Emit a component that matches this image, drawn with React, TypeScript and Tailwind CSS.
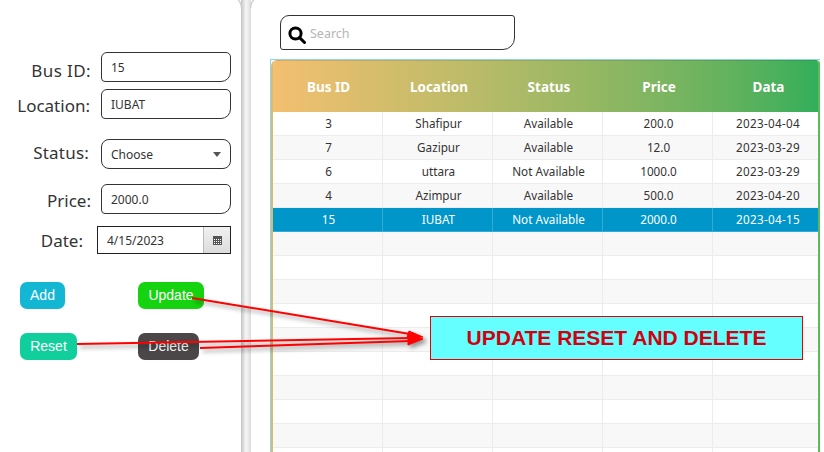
const rows = [
  ['3', 'Shafipur', 'Available', '200.0', '2023-04-04'],
  ['7', 'Gazipur', 'Available', '12.0', '2023-03-29'],
  ['6', 'uttara', 'Not Available', '1000.0', '2023-03-29'],
  ['4', 'Azimpur', 'Available', '500.0', '2023-04-20'],
  ['15', 'IUBAT', 'Not Available', '2000.0', '2023-04-15'],
];

const columns = ['Bus ID', 'Location', 'Status', 'Price', 'Data'];
const emptyRows = [0, 1, 2, 3, 4, 5, 6, 7, 8, 9];

function Field({ label, value, labelClass, className }: { label: string; value: string; labelClass: string; className: string }) {
  return (
    <div className={`flex items-center ${className}`}>
      <label className={`w-[91px] text-right text-[17px] leading-none text-[#333] ${labelClass}`}>{label}</label>
      <div className="ml-[10px] flex h-[30px] w-[130px] items-center rounded-tl-[6px] rounded-tr-[5px] rounded-br-[10px] rounded-bl-[4px] border border-[#333] bg-white pl-[9px] pt-[1px] text-[12px] text-[#333]">
        {value}
      </div>
    </div>
  );
}

function Table() {
  return (
    <div className="ml-[19px] mt-[9px] w-[550px] grow border-l border-t border-[#8fd3ee]">
      <div className="h-full w-[549px] overflow-hidden rounded-tl-[6px] rounded-tr-[4px] border-x-2 border-l-[#d8bd6c] border-r-[#5cb85c]">
        <div className="grid h-[52px] w-[550px] grid-cols-[111px_110px_110px_110px_109px] items-center bg-gradient-to-r from-[#f3bf70] to-[#2dae5a] pt-[2px] text-[13.5px] font-bold text-white shadow-[inset_0_1px_0_rgba(0,0,0,0.1)]">
          {columns.map((c) => (
            <div key={c} className="text-center">{c}</div>
          ))}
        </div>
        {rows.map((row, i) => (
          <div
            key={row[0]}
            className={`grid h-[24px] w-[550px] grid-cols-[110px_110px_110px_110px_110px] border-b text-[11.7px] ${
              i === 4
                ? 'border-[#33abd4] bg-[#0096c9] text-white'
                : i % 2 === 0
                  ? 'border-[#ececec] bg-white text-[#333]'
                  : 'border-[#ececec] bg-[#f8f8f8] text-[#333]'
            }`}
          >
            {row.map((cell, j) => (
              <div key={j} className={`flex items-center justify-center ${j === 4 ? 'tracking-[0.3px]' : 'pl-[2px]'} ${j < 4 ? (i === 4 ? 'border-r border-[#33abd4]' : 'border-r border-[#ececec]') : ''}`}>
                {cell}
              </div>
            ))}
          </div>
        ))}
        {emptyRows.map((n) => (
          <div key={n} className={`grid h-[24px] w-[550px] grid-cols-[110px_110px_110px_110px_110px] border-b border-[#ececec] ${n % 2 === 0 ? 'bg-[#f8f8f8]' : 'bg-white'}`}>
            <div className="border-r border-[#ececec]" />
            <div className="border-r border-[#ececec]" />
            <div className="border-r border-[#ececec]" />
            <div className="border-r border-[#ececec]" />
            <div />
          </div>
        ))}
      </div>
    </div>
  );
}

export default function App() {
  return (
    <div className="relative flex h-[452px] w-[824px] overflow-hidden bg-white font-['Noto_Sans','Open_Sans',sans-serif]">
      <div className="w-[241px] shrink-0 pt-[52px]">
        <Field label="Bus ID:" value="15" labelClass="pt-[6px] tracking-[0.4px]" className="" />
        <Field label="Location:" value="IUBAT" labelClass="pt-[2px] pr-[1px]" className="mt-[7px]" />

        <div className="mt-[20px] flex items-center">
          <label className="w-[90px] pb-[4px] pr-[1px] text-right text-[17px] leading-none tracking-[0.2px] text-[#333]">Status:</label>
          <div className="ml-[11px] flex h-[30px] w-[130px] items-center justify-between rounded-[8px] border border-[#333] bg-white pl-[9px] pr-[9px] pt-[1px] text-[12px] text-[#333]">
            Choose
            <span className="h-0 w-0 border-x-[4px] border-t-[5px] border-x-transparent border-t-[#555]" />
          </div>
        </div>

        <Field label="Price:" value="2000.0" labelClass="pt-[2px]" className="mt-[15px]" />

        <div className="mt-[12px] flex items-center">
          <label className="w-[83px] text-right text-[17px] leading-none text-[#333]">Date:</label>
          <div className="ml-[14px] flex h-[28px] w-[134px] items-center border border-[#222] bg-white text-[12px] text-[#333]">
            <span className="grow pl-[9px] pt-[1px]">4/15/2023</span>
            <span className="flex h-full w-[27px] items-center justify-center border-l border-[#bbb] bg-gradient-to-b from-[#f1f1f1] to-[#dcdcdc]">
              <svg width="9" height="9" viewBox="0 0 9 9">
                <rect width="9" height="9" fill="#555" />
                <path d="M1 3h1v1H1zM3 3h1v1H3zM5 3h1v1H5zM7 3h1v1H7zM1 5h1v1H1zM3 5h1v1H3zM5 5h1v1H5zM7 5h1v1H7zM1 7h1v1H1zM3 7h1v1H3zM5 7h1v1H5zM7 7h1v1H7z" fill="#fff" />
              </svg>
            </span>
          </div>
        </div>

        <div className="ml-[20px] mt-[28px] flex gap-[73px] font-['Liberation_Sans',sans-serif] text-[14px] text-white">
          <button className="h-[27px] w-[45px] rounded-[7px] bg-[#13b7d4]">Add</button>
          <button className="h-[27px] w-[66px] rounded-[7px] bg-[#15d30f]">Update</button>
        </div>
        <div className="ml-[20px] mt-[24px] flex gap-[61px] font-['Liberation_Sans',sans-serif] text-[14px] text-white">
          <button className="h-[27px] w-[57px] rounded-[7px] bg-[#10cf9c]">Reset</button>
          <button className="h-[27px] w-[61px] rounded-[7px] bg-[#4b4648]">Delete</button>
        </div>
      </div>

      <div className="w-[10px] shrink-0 bg-gradient-to-r from-[#c4c4c4] via-[#f6f6f6] to-[#dcdcdc]" />

      <div className="flex grow flex-col">
        <div className="ml-[29px] mt-[15px] flex h-[35px] w-[235px] shrink-0 items-center rounded-tl-[9px] rounded-tr-[3px] rounded-br-[12px] rounded-bl-[3px] border border-[#333] pl-[7px]">
          <svg className="mt-[5px]" width="18" height="18" viewBox="0 0 18 18" fill="none" stroke="#000" strokeWidth="3">
            <circle cx="7.5" cy="7.5" r="5.6" />
            <path d="M11.6 11.6 L16.5 16.5" strokeLinecap="round" />
          </svg>
          <span className="ml-[4px] pt-[3px] text-[12.5px] text-[#b5b5b5]">Search</span>
        </div>
        <Table />
      </div>

      {/* flare at the top of the split bar */}
      <svg className="absolute left-[236px] top-0" width="20" height="8" viewBox="0 0 20 8" fill="none" stroke="#d0d0d0" strokeWidth="1.5">
        <path d="M2 0 Q5 2 5.5 8" />
        <path d="M18 0 Q15 2 14.5 8" />
      </svg>

      <div className="absolute left-[430px] top-[316px] flex h-[44px] w-[373px] items-center justify-center border border-[#e00000] bg-[#66ffff] font-['Liberation_Sans',sans-serif] text-[21px] font-bold text-[#d00010]">
        UPDATE RESET AND DELETE
      </div>

      <svg className="absolute left-0 top-0 drop-shadow-[3px_3px_2px_rgba(0,0,0,0.4)]" width="824" height="452" viewBox="0 0 824 452" fill="#f00" stroke="#f00">
        <path d="M192 298 L410 334" strokeWidth="2" />
        <path d="M423 337 L409 331 L407 338 Z" />
        <path d="M77 344 L410 338" strokeWidth="2" />
        <path d="M200 348 L410 341" strokeWidth="2" />
        <path d="M423 339 L408 333 L408 345 Z" />
      </svg>
    </div>
  );
}
